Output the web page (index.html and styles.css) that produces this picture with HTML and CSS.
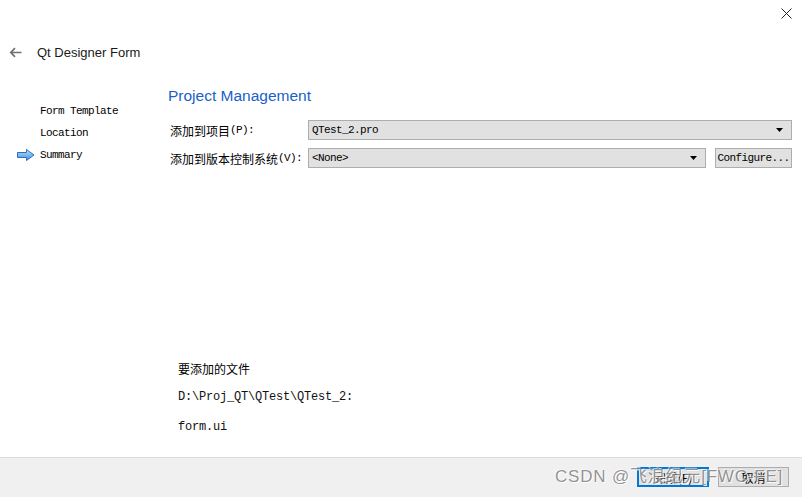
FILE: index.html
```html
<!DOCTYPE html>
<html lang="zh">
<head>
<meta charset="utf-8">
<title>Qt Designer Form</title>
<link rel="stylesheet" href="styles.css">
</head>
<body>
<div class="window">
  <div class="topbar">
    <button class="close" aria-label="Close">
      <svg width="11" height="11" viewBox="0 0 11 11"><path d="M0.5 0.5 L10.5 10.5 M10.5 0.5 L0.5 10.5" stroke="#222" stroke-width="1" fill="none"/></svg>
    </button>
  </div>
  <div class="header">
    <svg class="back" width="13" height="11" viewBox="0 0 13 11"><path d="M12.5 5.5 H1.8 M6 1.2 L1.8 5.5 L6 9.8" stroke="#6f6f6f" stroke-width="1.7" fill="none"/></svg>
    <span class="header-title">Qt Designer Form</span>
  </div>
  <div class="main">
    <nav class="steps">
      <div class="step"><span class="step-icon"></span><span class="step-text">Form Template</span></div>
      <div class="step"><span class="step-icon"></span><span class="step-text">Location</span></div>
      <div class="step current">
        <span class="step-icon">
          <svg width="18" height="12" viewBox="0 0 18 12">
            <defs><linearGradient id="ag" x1="0" y1="0" x2="0" y2="1"><stop offset="0" stop-color="#bfe0fb"/><stop offset="1" stop-color="#3f8fe0"/></linearGradient></defs>
            <path d="M0.5 3.5 H9.5 V0.5 L17 6 L9.5 11.5 V8.5 H0.5 Z" fill="url(#ag)" stroke="#2c6fbf" stroke-width="1"/>
          </svg>
        </span>
        <span class="step-text">Summary</span>
      </div>
    </nav>
    <section class="content">
      <h1 class="page-title">Project Management</h1>
      <div class="form">
        <label class="label"><span class="cjk">添加到项目</span>(P):</label>
        <div class="combo span2"><span class="combo-text">QTest_2.pro</span><svg class="caret" width="7" height="4" viewBox="0 0 7 4"><path d="M0 0 H7 L3.5 4 Z" fill="#000"/></svg></div>
        <label class="label"><span class="cjk">添加到版本控制系统</span>(V):</label>
        <div class="combo"><span class="combo-text">&lt;None&gt;</span><svg class="caret" width="7" height="4" viewBox="0 0 7 4"><path d="M0 0 H7 L3.5 4 Z" fill="#000"/></svg></div>
        <button class="btn">Configure...</button>
      </div>
      <div class="files">
        <div class="files-head">要添加的文件</div>
        <div class="path">D:\Proj_QT\QTest\QTest_2:</div>
        <div class="path last">form.ui</div>
      </div>
    </section>
  </div>
  <div class="footer">
    <button class="fbtn primary">完成(F)</button>
    <button class="fbtn">取消</button>
    <div class="watermark">CSDN @飞浪纪元[FWC-FE]</div>
  </div>
</div>
</body>
</html>
```

FILE: styles.css
```css
* { box-sizing: border-box; }
html, body { margin: 0; padding: 0; background: #fff; }
body { width: 802px; height: 497px; overflow: hidden; font-family: "Liberation Sans", Arial, sans-serif; color: #000; }

.window { width: 802px; height: 497px; display: flex; flex-direction: column; }

.topbar { height: 30px; display: flex; justify-content: flex-end; padding: 8px 10px 0 0; }
.close { width: 11px; height: 11px; padding: 0; border: 0; background: none; display: block; }
.close svg { display: block; }

.header { height: 45px; display: flex; align-items: center; padding-left: 9px; }
.back { display: block; }
.header-title { margin-left: 15px; font-size: 13px; color: #1a1a1a; }

.main { flex: 1; display: flex; min-height: 0; }

.steps { width: 168px; padding-top: 25px; }
.step { display: flex; align-items: center; height: 22px; }
.step-icon { width: 40px; height: 22px; display: flex; align-items: center; padding-left: 17px; }
.step-icon svg { display: block; }
.step-text { font-family: "Liberation Mono", monospace; font-size: 11px; letter-spacing: -0.6px; color: #000; }

.content { flex: 1; display: flex; flex-direction: column; padding: 11px 10px 21px 0; }
.page-title { margin: 0 0 14px 0; font-weight: normal; font-size: 15.5px; line-height: 20px; color: #1a5fc8; }

.form { display: grid; grid-template-columns: 138px 1fr auto; row-gap: 8px; margin-left: 2px; }
.label { display: flex; align-items: center; height: 20px; font-family: "Liberation Mono", monospace; font-size: 11px; letter-spacing: -0.6px; }
.cjk { font-family: "Noto Sans CJK SC", sans-serif; font-size: 12px; letter-spacing: 0; }
.combo { height: 20px; display: flex; align-items: center; justify-content: space-between; background: #e1e1e1; border: 1px solid #adadad; padding: 0 8px 0 3px; }
.combo.span2 { grid-column: 2 / 4; }
.combo-text { font-family: "Liberation Mono", monospace; font-size: 11px; letter-spacing: -0.6px; }
.caret { display: block; }
.btn { height: 20px; width: 77px; margin-left: 9px; padding: 0; background: #e1e1e1; border: 1px solid #adadad; font-family: "Liberation Mono", monospace; font-size: 11px; letter-spacing: -0.6px; color: #000; }

.files { margin-top: auto; padding-left: 10px; }
.files-head { font-family: "Noto Sans CJK SC", sans-serif; font-size: 12px; line-height: 18px; margin-bottom: 10px; }
.path { font-family: "Liberation Mono", monospace; font-size: 12px; letter-spacing: -0.2px; line-height: 18px; margin-bottom: 12px; color: #111; }
.path.last { margin-bottom: 0; }

.footer { position: relative; height: 40px; flex: none; background: #f0f0f0; border-top: 1px solid #dcdcdc; display: flex; justify-content: flex-end; align-items: flex-start; gap: 9px; padding: 9px 13px 0 0; }
.fbtn { height: 20px; width: 71px; padding: 0; background: #e1e1e1; border: 1px solid #adadad; font-family: "Noto Sans CJK SC", sans-serif; font-size: 12px; color: #000; }
.fbtn.primary { width: 72px; border: 2px solid #0078d7; }
.watermark { position: absolute; left: 555px; top: 9px; line-height: 20px; font-family: "Liberation Sans", "Noto Sans CJK SC", sans-serif; font-size: 17px; letter-spacing: 0.8px; color: rgba(120,120,120,0.8); text-shadow: 1px 1px 0 rgba(255,255,255,0.9), -1px -1px 0 rgba(255,255,255,0.6); white-space: nowrap; pointer-events: none; }
```
